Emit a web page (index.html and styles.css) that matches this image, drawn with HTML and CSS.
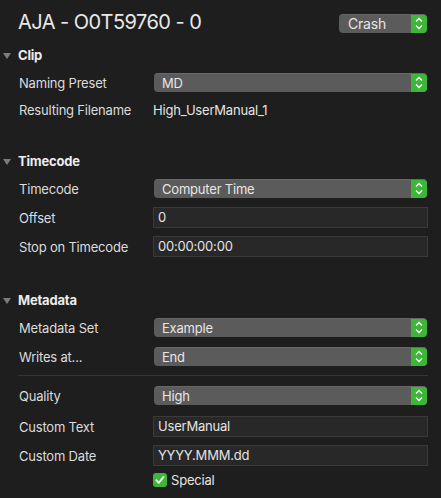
FILE: index.html
```html
<!DOCTYPE html>
<html>
<head>
<meta charset="utf-8">
<link rel="stylesheet" href="styles.css">
</head>
<body>
<div class="panel">
  <div class="titlebar">
    <div class="title">AJA - O0T59760 - 0</div>
    <div class="popup popup-small"><span class="popup-text">Crash</span><span class="stepper"><svg width="16" height="19" viewBox="0 0 16 19"><path d="M5 7.5 L8 4.5 L11 7.5 M5 11.5 L8 14.5 L11 11.5" fill="none" stroke="#fff" stroke-width="1.3"/></svg></span></div>
  </div>

  <div class="section-head head-clip"><span class="tri"></span>Clip</div>
  <div class="row r-first"><span class="label">Naming Preset</span><div class="popup"><span class="popup-text">MD</span><span class="stepper"><svg width="16" height="19" viewBox="0 0 16 19"><path d="M5 7.5 L8 4.5 L11 7.5 M5 11.5 L8 14.5 L11 11.5" fill="none" stroke="#fff" stroke-width="1.3"/></svg></span></div></div>
  <div class="row r-plain"><span class="label">Resulting Filename</span><span class="value">High_UserManual_1</span></div>

  <div class="section-head head-tc"><span class="tri"></span>Timecode</div>
  <div class="row r-first"><span class="label">Timecode</span><div class="popup"><span class="popup-text">Computer Time</span><span class="stepper"><svg width="16" height="19" viewBox="0 0 16 19"><path d="M5 7.5 L8 4.5 L11 7.5 M5 11.5 L8 14.5 L11 11.5" fill="none" stroke="#fff" stroke-width="1.3"/></svg></span></div></div>
  <div class="row r-field1"><span class="label">Offset</span><div class="field">0</div></div>
  <div class="row r-field"><span class="label">Stop on Timecode</span><div class="field">00:00:00:00</div></div>

  <div class="section-head head-meta"><span class="tri"></span>Metadata</div>
  <div class="row r-first"><span class="label">Metadata Set</span><div class="popup"><span class="popup-text">Example</span><span class="stepper"><svg width="16" height="19" viewBox="0 0 16 19"><path d="M5 7.5 L8 4.5 L11 7.5 M5 11.5 L8 14.5 L11 11.5" fill="none" stroke="#fff" stroke-width="1.3"/></svg></span></div></div>
  <div class="row r-popup"><span class="label">Writes at...</span><div class="popup"><span class="popup-text">End</span><span class="stepper"><svg width="16" height="19" viewBox="0 0 16 19"><path d="M5 7.5 L8 4.5 L11 7.5 M5 11.5 L8 14.5 L11 11.5" fill="none" stroke="#fff" stroke-width="1.3"/></svg></span></div></div>
  <div class="separator"></div>
  <div class="row r-quality"><span class="label">Quality</span><div class="popup"><span class="popup-text">High</span><span class="stepper"><svg width="16" height="19" viewBox="0 0 16 19"><path d="M5 7.5 L8 4.5 L11 7.5 M5 11.5 L8 14.5 L11 11.5" fill="none" stroke="#fff" stroke-width="1.3"/></svg></span></div></div>
  <div class="row r-field2"><span class="label">Custom Text</span><div class="field">UserManual</div></div>
  <div class="row r-field"><span class="label">Custom Date</span><div class="field">YYYY.MMM.dd</div></div>
  <div class="row r-check"><span class="label"></span><div class="check-wrap"><span class="checkbox"><svg width="14" height="14" viewBox="0 0 14 14"><path d="M3.3 7.2 L5.8 9.8 L10.6 3.9" fill="none" stroke="#fff" stroke-width="1.8" stroke-linecap="round" stroke-linejoin="round"/></svg></span><span class="check-label">Special</span></div></div>
</div>
</body>
</html>
```

FILE: styles.css
```css
html, body {
  margin: 0;
  padding: 0;
  background: #1e1e1e;
}
body {
  width: 441px;
  height: 498px;
  overflow: hidden;
  font-family: Inter, "Noto Sans", "Liberation Sans", sans-serif;
  color: #dedede;
  font-size: 13px;
  letter-spacing: -0.2px;
}
.panel {
  display: flex;
  flex-direction: column;
  padding: 10px 13px 0 0;
}
.titlebar {
  display: flex;
  align-items: center;
  justify-content: space-between;
  height: 24px;
  padding-left: 18px;
}
.title {
  font-size: 20px;
  color: #e8e8e8;
  letter-spacing: -0.55px;
}
.popup {
  display: flex;
  align-items: center;
  height: 19px;
  background: #5b5b5b;
  border-top: 1px solid #686868;
  box-sizing: border-box;
  border-radius: 4px;
  overflow: hidden;
  flex: 1;
  margin-right: 1px;
}
.popup-small {
  flex: 0 0 88px;
  margin-top: 3px;
}
.popup-small .popup-text {
  font-size: 14px;
  padding-left: 9px;
}
.popup-text {
  flex: 1;
  padding-left: 8px;
  color: #e6e6e6;
  line-height: 18px;
  white-space: nowrap;
}
.stepper {
  width: 16px;
  height: 19px;
  margin-top: -1px;
  background: #3db63a;
  display: flex;
}
.section-head {
  display: flex;
  align-items: center;
  height: 20px;
  font-weight: 700;
  color: #ececec;
  font-size: 13px;
}
.tri {
  width: 0;
  height: 0;
  border-left: 4.5px solid transparent;
  border-right: 4.5px solid transparent;
  border-top: 6px solid #7c7c7c;
  margin: 1px 7px 0 3px;
}
.head-clip { margin-top: 11px; }
.head-tc { margin-top: 32px; }
.head-meta { margin-top: 33px; }
.row {
  display: flex;
  align-items: center;
  padding-left: 19px;
}
.label {
  flex: 0 0 135px;
  color: #dcdcdc;
  white-space: nowrap;
}
.value {
  margin-left: -1px;
  color: #e4e4e4;
}
.r-first { margin-top: 8px; height: 19px; }
.r-plain { margin-top: 8px; height: 19px; }
.r-popup { margin-top: 10px; height: 19px; }
.r-quality { margin-top: 10px; height: 19px; }
.r-field1 { margin-top: 9px; height: 21px; }
.r-field2 { margin-top: 11px; height: 21px; }
.r-field { margin-top: 8px; height: 21px; }
.r-check { margin-top: 7px; height: 14px; }
.field {
  flex: 1;
  margin-left: -1px;
  height: 21px;
  box-sizing: border-box;
  background: #282828;
  border: 1px solid #3a3a3a;
  padding-left: 4px;
  line-height: 19px;
  color: #e4e4e4;
}
.separator {
  margin: 9px 0 0 18px;
  height: 1px;
  background: #363636;
}
.check-wrap {
  display: flex;
  align-items: center;
  margin-left: -1px;
}
.checkbox {
  width: 14px;
  height: 14px;
  border-radius: 3px;
  background: #3db63a;
  display: flex;
}
.check-label {
  margin-left: 4px;
  color: #e4e4e4;
}
```
